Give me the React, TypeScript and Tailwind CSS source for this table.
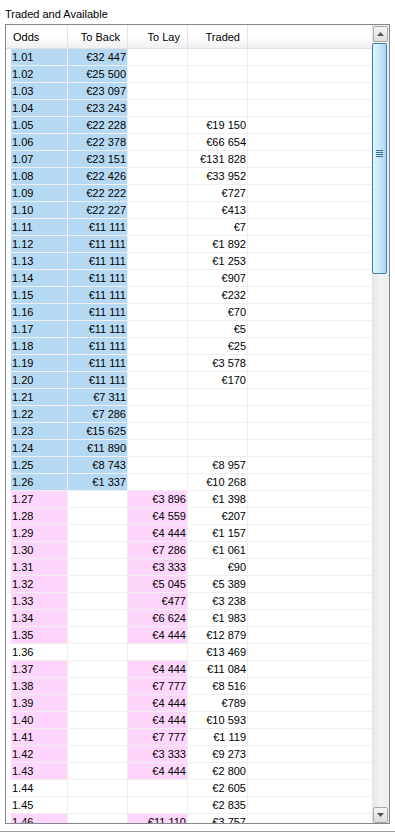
import React from "react";

type Row = { odds: string; back?: string; lay?: string; traded?: string };

const rows: Row[] = [
  { odds: "1.01", back: "€32 447" },
  { odds: "1.02", back: "€25 500" },
  { odds: "1.03", back: "€23 097" },
  { odds: "1.04", back: "€23 243" },
  { odds: "1.05", back: "€22 228", traded: "€19 150" },
  { odds: "1.06", back: "€22 378", traded: "€66 654" },
  { odds: "1.07", back: "€23 151", traded: "€131 828" },
  { odds: "1.08", back: "€22 426", traded: "€33 952" },
  { odds: "1.09", back: "€22 222", traded: "€727" },
  { odds: "1.10", back: "€22 227", traded: "€413" },
  { odds: "1.11", back: "€11 111", traded: "€7" },
  { odds: "1.12", back: "€11 111", traded: "€1 892" },
  { odds: "1.13", back: "€11 111", traded: "€1 253" },
  { odds: "1.14", back: "€11 111", traded: "€907" },
  { odds: "1.15", back: "€11 111", traded: "€232" },
  { odds: "1.16", back: "€11 111", traded: "€70" },
  { odds: "1.17", back: "€11 111", traded: "€5" },
  { odds: "1.18", back: "€11 111", traded: "€25" },
  { odds: "1.19", back: "€11 111", traded: "€3 578" },
  { odds: "1.20", back: "€11 111", traded: "€170" },
  { odds: "1.21", back: "€7 311" },
  { odds: "1.22", back: "€7 286" },
  { odds: "1.23", back: "€15 625" },
  { odds: "1.24", back: "€11 890" },
  { odds: "1.25", back: "€8 743", traded: "€8 957" },
  { odds: "1.26", back: "€1 337", traded: "€10 268" },
  { odds: "1.27", lay: "€3 896", traded: "€1 398" },
  { odds: "1.28", lay: "€4 559", traded: "€207" },
  { odds: "1.29", lay: "€4 444", traded: "€1 157" },
  { odds: "1.30", lay: "€7 286", traded: "€1 061" },
  { odds: "1.31", lay: "€3 333", traded: "€90" },
  { odds: "1.32", lay: "€5 045", traded: "€5 389" },
  { odds: "1.33", lay: "€477", traded: "€3 238" },
  { odds: "1.34", lay: "€6 624", traded: "€1 983" },
  { odds: "1.35", lay: "€4 444", traded: "€12 879" },
  { odds: "1.36", traded: "€13 469" },
  { odds: "1.37", lay: "€4 444", traded: "€11 084" },
  { odds: "1.38", lay: "€7 777", traded: "€8 516" },
  { odds: "1.39", lay: "€4 444", traded: "€789" },
  { odds: "1.40", lay: "€4 444", traded: "€10 593" },
  { odds: "1.41", lay: "€7 777", traded: "€1 119" },
  { odds: "1.42", lay: "€3 333", traded: "€9 273" },
  { odds: "1.43", lay: "€4 444", traded: "€2 800" },
  { odds: "1.44", traded: "€2 605" },
  { odds: "1.45", traded: "€2 835" },
  { odds: "1.46", lay: "€11 110", traded: "€3 757" },
];

const BLUE = "bg-[#b6d9f3]";
const PINK = "bg-[#fed6fd]";

const Arrow = ({ up }: { up: boolean }) => (
  <div className="mx-auto h-[16px] w-[15px] rounded-[2px] border border-[#a9a9a9] bg-gradient-to-b from-[#f6f6f6] to-[#dcdcdc] flex items-center justify-center">
    <svg width="7" height="4" viewBox="0 0 7 4">
      {up ? <path d="M0 4 L3.5 0 L7 4 Z" fill="#4a5560" /> : <path d="M0 0 L3.5 4 L7 0 Z" fill="#4a5560" />}
    </svg>
  </div>
);

const Scrollbar = () => (
  <div className="w-[17px] shrink-0 flex flex-col bg-gradient-to-r from-[#e6e6e6] via-[#f2f2f2] to-[#ececec] pt-[1px]">
    <Arrow up />
    <div className="mt-[1px] w-[15px] h-[231px] rounded-[2px] border border-[#3c7fb1] bg-gradient-to-r from-[#e4f4fc] via-[#c9e7f8] to-[#a7d8f2] flex flex-col items-center justify-center gap-[1px] pb-[10px]">
      <div className="w-[7px] h-[1px] bg-[#3c6f98]" />
      <div className="w-[7px] h-[1px] bg-[#3c6f98]" />
      <div className="w-[7px] h-[1px] bg-[#3c6f98]" />
      <div className="w-[7px] h-[1px] bg-[#3c6f98]" />
    </div>
    <div className="flex-1" />
    <Arrow up={false} />
  </div>
);

export default function App() {
  return (
    <div
      className="w-[395px] h-[833px] bg-white overflow-hidden text-[11px] text-black flex flex-col"
      style={{ fontFamily: '"Liberation Sans", Arial, sans-serif' }}
    >
      <div className="h-[24px] pl-[5px] pt-[8px] leading-[13px]">Traded and Available</div>
      <div className="ml-[5px] w-[385px] h-[800px] border border-[#828790] flex overflow-hidden">
        <div className="flex-1 flex flex-col overflow-hidden">
          <div className="h-[24px] shrink-0 flex bg-gradient-to-b from-white via-white to-[#eff0f2] border-b border-[#e0e1e3] leading-[24px]">
            <div className="w-[62px] pl-[7px] border-r border-[#e3e4e6]">Odds</div>
            <div className="w-[60px] pr-[7px] text-right border-r border-[#e3e4e6]">To Back</div>
            <div className="w-[60px] pr-[7px] text-right border-r border-[#e3e4e6]">To Lay</div>
            <div className="w-[60px] pr-[7px] text-right border-r border-[#e3e4e6]">Traded</div>
            <div className="flex-1" />
          </div>
          {rows.map((r) => {
            const isBack = !!r.back;
            const isLay = !!r.lay;
            const oddsBg = isBack ? BLUE : isLay ? PINK : "";
            return (
              <div key={r.odds} className="h-[17px] shrink-0 flex border-b border-[#efefef] leading-[16px]">
                <div className="w-[5px]" />
                <div className={`w-[57px] pl-[1px] border-r border-[#efefef] ${oddsBg}`}>{r.odds}</div>
                <div className={`w-[60px] pr-[1px] text-right border-r border-[#efefef] ${isBack ? BLUE : ""}`}>{r.back}</div>
                <div className={`w-[60px] pr-[1px] text-right border-r border-[#efefef] ${isLay ? PINK : ""}`}>{r.lay}</div>
                <div className="w-[60px] pr-[1px] text-right border-r border-[#efefef]">{r.traded}</div>
                <div className="flex-1" />
              </div>
            );
          })}
        </div>
        <Scrollbar />
      </div>
      <div className="mt-[7px] h-[1px] w-full bg-[#a0a0a0]" />
      <div className="h-[1px] w-full bg-white" />
    </div>
  );
}
